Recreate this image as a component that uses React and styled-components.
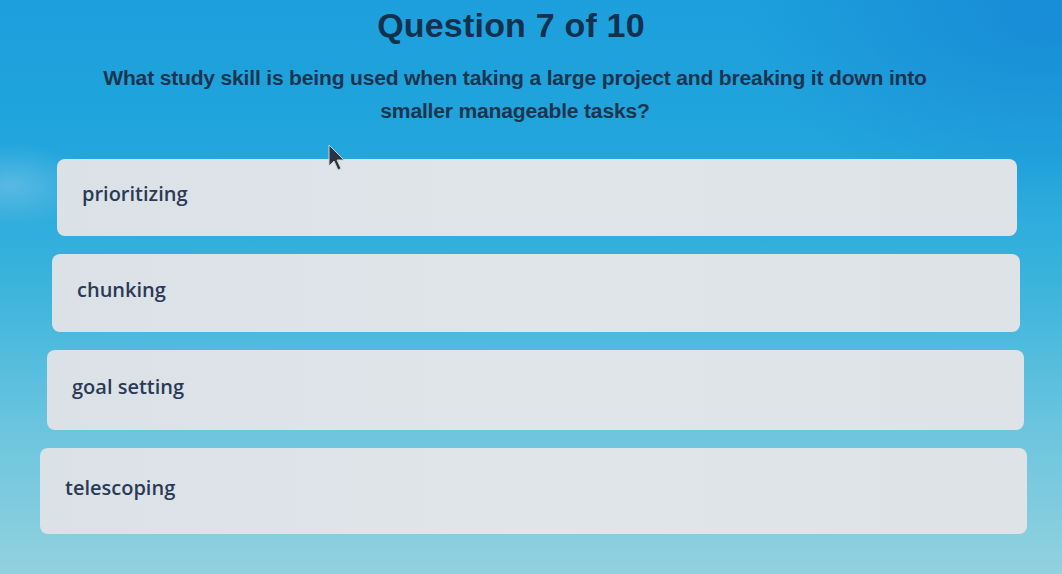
import styled, { createGlobalStyle } from 'styled-components';

const GlobalStyle = createGlobalStyle`
  html, body {
    margin: 0;
    padding: 0;
    width: 1062px;
    height: 574px;
    overflow: hidden;
  }
  body {
    font-family: "Liberation Sans", Arial, sans-serif;
  }
`;

const options = [
  { label: 'prioritizing', inset: [57, 45], height: 77 },
  { label: 'chunking', inset: [52, 42], height: 78 },
  { label: 'goal setting', inset: [47, 38], height: 80 },
  { label: 'telescoping', inset: [40, 35], height: 86 },
];

function Cursor() {
  return (
    <Pointer width="18" height="28" viewBox="0 0 18 28">
      <path d="M1 1 L1 22 L6 17 L10 26 L13 24.5 L9 16 L16 16 Z" fill="#2b3440" stroke="#c9d3dc" strokeWidth="1" />
    </Pointer>
  );
}

function App() {
  return (
    <>
      <GlobalStyle />
      <Screen>
        <Title>Question 7 of 10</Title>
        <Prompt>
          What study skill is being used when taking a large project and breaking it down into
          <br />
          smaller manageable tasks?
        </Prompt>
        <Options>
          {options.map((o) => (
            <Option key={o.label} $left={o.inset[0]} $right={o.inset[1]} $height={o.height}>
              <OptionText>{o.label}</OptionText>
            </Option>
          ))}
        </Options>
        <Cursor />
      </Screen>
    </>
  );
}

export default App;

const Screen = styled.div`
  position: relative;
  width: 1062px;
  height: 574px;
  box-sizing: border-box;
  padding-top: 5px;
  background:
    radial-gradient(ellipse 420px 260px at 1040px 20px, rgba(20, 120, 210, 0.5), transparent 70%),
    radial-gradient(ellipse 120px 60px at 10px 185px, rgba(150, 205, 235, 0.45), transparent 70%),
    linear-gradient(180deg, #1c9fdc 0%, #22a6dc 28%, #3cb4dc 50%, #6cc5de 75%, #92d1df 100%);
  display: flex;
  flex-direction: column;
`;

const Title = styled.h1`
  margin: 0;
  text-align: center;
  padding-right: 40px;
  font-size: 34px;
  line-height: 40px;
  font-weight: 700;
  color: #14304f;
  letter-spacing: 0.2px;
`;

const Prompt = styled.p`
  margin: 16px 0 0 0;
  text-align: center;
  padding-right: 32px;
  font-size: 21.1px;
  line-height: 33px;
  font-weight: 700;
  color: #1b3550;
  letter-spacing: -0.2px;
`;

const Options = styled.div`
  margin-top: 32px;
  display: flex;
  flex-direction: column;
  gap: 18px;
`;

const Option = styled.div`
  margin-left: ${(p) => p.$left}px;
  margin-right: ${(p) => p.$right}px;
  height: ${(p) => p.$height}px;
  border-radius: 8px;
  background: linear-gradient(90deg, #dbe2e7 0%, #e0e5e9 50%, #dde3e6 100%);
  display: flex;
  align-items: center;
  padding-left: 25px;
  padding-bottom: 8px;
  box-sizing: border-box;
`;

const OptionText = styled.span`
  font-family: "Open Sans", "Noto Sans", sans-serif;
  font-size: 20px;
  font-weight: 600;
  color: #2c3a55;
`;

const Pointer = styled.svg`
  position: absolute;
  left: 328px;
  top: 144px;
`;
